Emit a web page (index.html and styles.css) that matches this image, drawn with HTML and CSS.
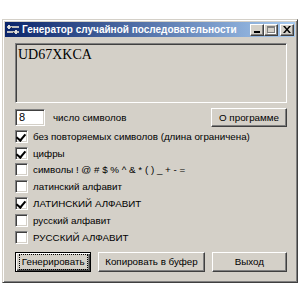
FILE: index.html
```html
<!DOCTYPE html>
<html lang="ru">
<head>
<meta charset="UTF-8">
<title>Генератор случайной последовательности</title>
<link rel="stylesheet" href="styles.css">
</head>
<body>
<div class="window">
    <div class="titlebar">
        <svg class="app-icon" width="14" height="12" viewBox="0 0 14 12">
            <rect x="1" y="2" width="12" height="2" fill="#c0c0c0"/>
            <rect x="1" y="7" width="12" height="2" fill="#c0c0c0"/>
            <rect x="2" y="1" width="2" height="4" fill="#e0e0e0"/>
            <rect x="9" y="6" width="2" height="4" fill="#e0e0e0"/>
            <rect x="5" y="3" width="1" height="1" fill="#404040"/>
            <rect x="7" y="8" width="1" height="1" fill="#404040"/>
        </svg>
        <span class="title">Генератор случайной последовательности</span>
        <div class="caption-btns">
            <div class="cbtn"><span class="min-glyph"></span></div>
            <div class="cbtn disabled"><span class="max-glyph"></span></div>
            <div class="cbtn close">
                <svg width="8" height="7" viewBox="0 0 8 7">
                    <path d="M0 0h2l2 2.5 2-2.5h2l-3 3.5 3 3.5h-2l-2-2.5-2 2.5h-2l3-3.5z" fill="#000"/>
                </svg>
            </div>
        </div>
    </div>

    <div class="content">
        <div class="output">UD67XKCA</div>

        <div class="count-row">
            <div class="num-input">8</div>
            <span class="count-label">число символов</span>
            <div class="btn about">О программе</div>
        </div>

        <ul class="options">
            <li><span class="check on"></span>без повторяемых символов (длина ограничена)</li>
            <li><span class="check on"></span>цифры</li>
            <li><span class="check"></span>символы ! @ # $ % ^ &amp; * ( ) _ + - =</li>
            <li><span class="check"></span>латинский алфавит</li>
            <li><span class="check on"></span>ЛАТИНСКИЙ АЛФАВИТ</li>
            <li><span class="check"></span>русский алфавит</li>
            <li><span class="check"></span>РУССКИЙ АЛФАВИТ</li>
        </ul>

        <div class="actions">
            <div class="btn default"><span class="focus">Генерировать</span></div>
            <div class="btn copy">Копировать в буфер</div>
            <div class="btn quit">Выход</div>
        </div>
    </div>
</div>
</body>
</html>
```

FILE: styles.css
```css
* {
    box-sizing: border-box;
}

body {
    margin: 0;
    background: #fff;
    font-family: 'Liberation Sans', Arial, sans-serif;
    font-size: 9.8px;
    color: #000;
}

.window {
    margin: 19px 2px 0 2px;
    width: 296px;
    height: 264px;
    background: #d4d0c8;
    border: 1px solid;
    border-color: #d4d0c8 #404040 #404040 #d4d0c8;
    box-shadow: inset 1px 1px 0 #fff, inset -1px -1px 0 #808080;
    padding: 2px;
}

.titlebar {
    height: 15px;
    display: flex;
    align-items: center;
    background: linear-gradient(90deg, #0a246a, #a6caf0);
    color: #fff;
    padding-left: 1px;
}

.app-icon {
    flex: none;
    margin-right: 2px;
}

.title {
    font-weight: bold;
    font-size: 10px;
    white-space: nowrap;
    flex: 1;
    overflow: hidden;
}

.caption-btns {
    display: flex;
    padding-right: 1px;
}

.cbtn {
    width: 14px;
    height: 12px;
    background: #d4d0c8;
    border: 1px solid;
    border-color: #fff #404040 #404040 #fff;
    box-shadow: inset -1px -1px 0 #808080;
    display: flex;
    align-items: center;
    justify-content: center;
}

.cbtn.close {
    margin-left: 2px;
}

.min-glyph {
    width: 6px;
    height: 2px;
    background: #000;
    margin-top: 5px;
}

.max-glyph {
    width: 8px;
    height: 7px;
    border: 1px solid #808080;
    border-top-width: 2px;
    box-shadow: 1px 1px 0 #fff;
}

.content {
    padding: 6px 8px 0 10px;
}

.output {
    height: 60px;
    background: #d4d0c8;
    border: 1px solid;
    border-color: #808080 #fff #fff #808080;
    box-shadow: inset 1px 1px 0 #404040, inset -1px -1px 0 #d4d0c8;
    font-family: 'Liberation Serif', 'Times New Roman', serif;
    font-size: 14px;
    padding: 3px 0 0 2px;
}

.count-row {
    display: flex;
    align-items: center;
    margin-top: 5px;
    height: 19px;
}

.num-input {
    width: 30px;
    height: 17px;
    background: #fff;
    border: 1px solid;
    border-color: #808080 #fff #fff #808080;
    box-shadow: inset 1px 1px 0 #404040, inset -1px -1px 0 #d4d0c8;
    padding: 1px 0 0 3px;
    font-size: 11px;
}

.count-label {
    margin-left: 8px;
    flex: 1;
}

.btn {
    height: 19px;
    background: #d4d0c8;
    border: 1px solid;
    border-color: #fff #404040 #404040 #fff;
    box-shadow: inset -1px -1px 0 #808080;
    display: flex;
    align-items: center;
    justify-content: center;
    white-space: nowrap;
}

.about {
    width: 76px;
}

.options {
    list-style: none;
    margin: 1px 0 0 0;
    padding: 0;
}

.options li {
    height: 16.8px;
    display: flex;
    align-items: center;
}

.check {
    width: 13px;
    height: 13px;
    flex: none;
    background: #fff;
    border: 1px solid;
    border-color: #808080 #fff #fff #808080;
    box-shadow: inset 1px 1px 0 #404040, inset -1px -1px 0 #d4d0c8;
    margin-right: 5px;
    position: relative;
}

.check.on::after {
    content: "";
    position: absolute;
    left: 2px;
    top: 1px;
    width: 4px;
    height: 7px;
    border: solid #000;
    border-width: 0 2px 2px 0;
    transform: rotate(40deg);
}

.actions {
    display: flex;
    gap: 7px;
    margin-top: 6px;
}

.actions .btn {
    height: 20px;
}

.default {
    width: 77px;
    border: 1px solid #000;
    box-shadow: inset 1px 1px 0 #fff, inset -1px -1px 0 #404040, inset -2px -2px 0 #808080;
}

.default .focus {
    border: 1px dotted #000;
    padding: 1px 2px;
    line-height: 12px;
}

.copy {
    width: 107px;
}

.quit {
    width: 76px;
}
```
